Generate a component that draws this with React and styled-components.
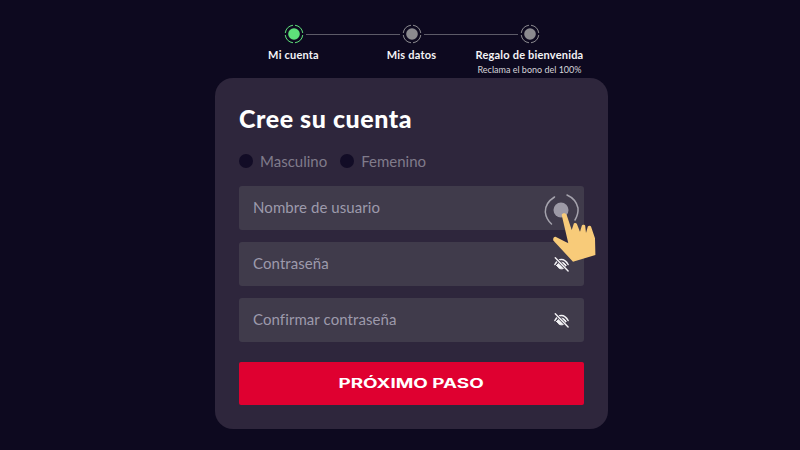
import React from "react";
import styled, { createGlobalStyle } from "styled-components";

const Global = createGlobalStyle`
  html, body { margin: 0; padding: 0; background: #0d091f; }
  body { width: 800px; height: 450px; overflow: hidden; font-family: "Lato", "Noto Sans", sans-serif; }
`;

const Page = styled.div`
  width: 800px;
  height: 450px;
  background: #0d091f;
  display: flex;
  flex-direction: column;
  align-items: center;
  padding: 24px 0 0 23px;
  box-sizing: border-box;
`;

const Stepper = styled.div`
  display: flex;
  width: 354px;
  height: 54px;
`;

const Step = styled.div`
  width: 118px;
  display: flex;
  flex-direction: column;
  align-items: center;
  position: relative;
`;

const Connector = styled.div`
  position: absolute;
  top: 10px;
  left: calc(50% + 12px);
  width: 94px;
  height: 1px;
  background: #5d5b68;
`;

const StepLabel = styled.div`
  margin-top: 4px;
  font-size: 11px;
  line-height: 14px;
  font-weight: 700;
  color: #f4f3f6;
  white-space: nowrap;
  letter-spacing: 0.2px;
`;

const StepSub = styled.div`
  font-size: 9px;
  line-height: 13px;
  margin-top: 1px;
  color: #d6d5da;
  white-space: nowrap;
`;

const Card = styled.div`
  width: 393px;
  height: 351px;
  background: #2e263c;
  border-radius: 18px;
  padding: 25px 24px 0;
  box-sizing: border-box;
  position: relative;
  display: flex;
  flex-direction: column;
`;

const Title = styled.h1`
  margin: 0;
  font-size: 25px;
  line-height: 30px;
  font-weight: 900;
  color: #fff;
  letter-spacing: 0.55px;
`;

const Genders = styled.div`
  display: flex;
  gap: 13px;
  margin-top: 18px;
  height: 20px;
  align-items: center;
`;

const Gender = styled.label`
  display: flex;
  align-items: center;
  gap: 7px;
  font-size: 15px;
  color: #807b8b;
`;

const Radio = styled.span`
  width: 14px;
  height: 14px;
  border-radius: 50%;
  background: #120c26;
`;

const Fields = styled.div`
  display: flex;
  flex-direction: column;
  gap: 12px;
  margin-top: 15px;
`;

const Field = styled.div`
  height: 44px;
  background: #403b4b;
  border-radius: 3px;
  padding: 0 14px;
  box-sizing: border-box;
  display: flex;
  align-items: center;
  justify-content: space-between;
  font-size: 15px;
  color: #9d9aac;
  letter-spacing: 0.08px;
`;

const FieldText = styled.span`
  margin-bottom: 2px;
`;

const Submit = styled.button`
  margin-top: 20px;
  height: 43px;
  border: 0;
  border-radius: 2px;
  background: #df0030;
  color: #fff;
  font-family: "Inter", sans-serif;
  font-weight: 700;
  font-size: 13px;
  padding: 0;
`;

const SubmitLabel = styled.span`
  display: inline-block;
  transform: scaleX(1.45);
  margin-bottom: 2px;
`;

const Pointer = styled.svg`
  position: absolute;
  left: 325px;
  top: 112px;
  overflow: visible;
`;

const Ring = ({ color }) => (
  <svg width="20" height="20" viewBox="0 0 20 20">
    <circle cx="10" cy="10" r="5.8" fill={color} />
    <g fill="none" stroke={color} strokeWidth="1" strokeLinecap="round">
      <path d="M1.3 8.6A8.8 8.8 0 0 1 8.6 1.3" />
      <path d="M11.4 1.3A8.8 8.8 0 0 1 18.7 8.6" />
      <path d="M18.7 11.4A8.8 8.8 0 0 1 11.4 18.7" />
      <path d="M8.6 18.7A8.8 8.8 0 0 1 1.3 11.4" />
    </g>
  </svg>
);

const EyeOff = () => (
  <svg width="17" height="17" viewBox="0 0 18 18" fill="none" stroke="#f4f3f6" strokeLinecap="round">
    <path d="M2 9C4 5.2 6.5 3.6 9 3.6s5 1.6 7 5.4" strokeWidth="1.6" />
    <path d="M4 10C5.5 12.6 7 13.6 9 13.6s3.5-1 5-3.6C12.5 7.6 11 6.6 9 6.6S5.5 7.6 4 10Z" fill="#f4f3f6" strokeWidth="1" />
    <path d="M2.4 1.8 16 16" stroke="#403b4b" strokeWidth="3" />
    <path d="M2.4 1.8 16 16" strokeWidth="1.5" />
  </svg>
);

export default function App() {
  return (
    <Page>
      <Global />
      <Stepper>
        <Step>
          <Ring color="#5ee07a" />
          <Connector />
          <StepLabel>Mi cuenta</StepLabel>
        </Step>
        <Step>
          <Ring color="#8b8a8f" />
          <Connector />
          <StepLabel>Mis datos</StepLabel>
        </Step>
        <Step>
          <Ring color="#8b8a8f" />
          <StepLabel>Regalo de bienvenida</StepLabel>
          <StepSub>Reclama el bono del 100%</StepSub>
        </Step>
      </Stepper>
      <Card>
        <Title>Cree su cuenta</Title>
        <Genders>
          <Gender><Radio />Masculino</Gender>
          <Gender><Radio />Femenino</Gender>
        </Genders>
        <Fields>
          <Field><FieldText>Nombre de usuario</FieldText></Field>
          <Field><FieldText>Contraseña</FieldText><EyeOff /></Field>
          <Field><FieldText>Confirmar contraseña</FieldText><EyeOff /></Field>
        </Fields>
        <Submit><SubmitLabel>PRÓXIMO PASO</SubmitLabel></Submit>
        <Pointer width="60" height="76" viewBox="0 0 60 76">
          <circle cx="21" cy="20" r="7.5" fill="#9d9aa6" />
          <g fill="none" stroke="#a5a3ad" strokeWidth="1.5" strokeLinecap="round">
            <path d="M14.5 7Q5 13 5.3 22Q6 29 11.5 34" />
            <path d="M27 5Q36 9 38 18Q38.5 24 35 30" />
          </g>
          <path
            d="M21.7 25C22 23 25.8 22.4 26.7 25L31.7 40L33.6 34.2C34 32.8 36.4 32.8 36.9 34L40 41.7L41.8 35.8C42.3 34.5 44.8 34.5 45.2 35.8L46 43L47.8 36.6C48.3 35.3 50.6 35.3 51 36.6L55 48.3L55.4 65L33 71.7L13.3 50.5C12.8 48 14 46.5 15.5 46.7L28.3 53.3Z"
            fill="#f8cb79"
          />
        </Pointer>
      </Card>
    </Page>
  );
}
